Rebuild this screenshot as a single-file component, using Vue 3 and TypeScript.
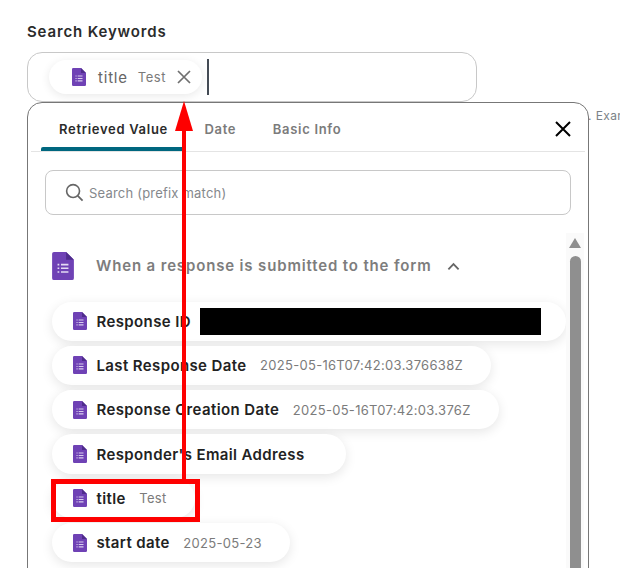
<script setup lang="ts">
interface Row { name: string; value?: string; redacted?: boolean }
const rows: Row[] = [
  { name: 'Response ID', redacted: true },
  { name: 'Last Response Date', value: '2025-05-16T07:42:03.376638Z' },
  { name: 'Response Creation Date', value: '2025-05-16T07:42:03.376Z' },
  { name: "Responder's Email Address", value: '' },
  { name: 'title', value: 'Test' },
  { name: 'start date', value: '2025-05-23' },
]
const tabs = ['Retrieved Value', 'Date', 'Basic Info']
</script>

<template>
  <div class="page">
    <div class="label">Search Keywords</div>
    <div class="field">
      <div class="chip">
        <svg class="ficon" viewBox="0 0 14 18"><path fill="#6f42b5" d="M1.2 0H9l5 5v11.800a1.200 1.200 0 0 1-1.200 1.200H1.200A1.200 1.200 0 0 1 0 16.800V1.200A1.200 1.200 0 0 1 1.200 0z"/><path fill="#4f2c8c" d="M9 0l5 5H9z"/><path fill="#d9cdee" d="M3.500 7.500h1.100v1.100H3.500zM5.700 7.500h4.800v1.100H5.700zM3.500 9.900h1.100V11H3.500zM5.700 9.900h4.800V11H5.700zM3.500 12.300h1.100v1.100H3.500zM5.700 12.300h4.800v1.100H5.700z"/></svg>
        <span class="chip-name">title</span>
        <span class="chip-value">Test</span>
        <svg class="chip-x" viewBox="0 0 14 14"><path d="M1 1l12 12M13 1L1 13" stroke="#6f6f6f" stroke-width="1.700" fill="none"/></svg>
      </div>
      <div class="caret"></div>
    </div>
    <div class="hint">. Example</div>
    <div class="popup">
      <div class="tabs">
        <div v-for="(t, i) in tabs" :key="t" class="tab" :class="{ active: i === 0 }">{{ t }}</div>
        <svg class="close" viewBox="0 0 18 18"><path d="M2 2l14 14M16 2L2 16" stroke="#000" stroke-width="2" fill="none"/></svg>
      </div>
      <div class="search">
        <svg class="search-icon" viewBox="0 0 20 20"><circle cx="8.500" cy="8.500" r="6.800" fill="none" stroke="#666" stroke-width="1.700"/><path d="M13.500 13.500l5 5" stroke="#666" stroke-width="1.900" fill="none"/></svg>
        <span class="placeholder">Search (prefix match)</span>
      </div>
      <div class="body">
        <div class="list">
          <div class="head">
            <svg class="head-icon" viewBox="0 0 14 18"><path fill="#6f42b5" d="M1.200 0H9l5 5v11.800a1.200 1.200 0 0 1-1.200 1.200H1.200A1.200 1.200 0 0 1 0 16.800V1.200A1.200 1.200 0 0 1 1.200 0z"/><path fill="#4f2c8c" d="M9 0l5 5H9z"/><path fill="#e4dbf3" d="M3.500 7.500h1.100v1.100H3.500zM5.700 7.500h4.800v1.100H5.700zM3.500 9.900h1.100V11H3.500zM5.700 9.900h4.800V11H5.700zM3.500 12.300h1.100v1.100H3.500zM5.700 12.300h4.800v1.100H5.700z"/></svg>
            <span class="head-text">When a response is submitted to the form</span>
            <svg class="chev" viewBox="0 0 14 9"><path d="M1.500 7.500L7 2l5.500 5.500" fill="none" stroke="#666" stroke-width="2"/></svg>
          </div>
          <div v-for="r in rows" :key="r.name" class="row" :class="{ wide: r.redacted }">
            <svg class="ficon" viewBox="0 0 14 18"><path fill="#6f42b5" d="M1.200 0H9l5 5v11.800a1.200 1.200 0 0 1-1.200 1.200H1.200A1.200 1.200 0 0 1 0 16.800V1.200A1.200 1.200 0 0 1 1.200 0z"/><path fill="#4f2c8c" d="M9 0l5 5H9z"/><path fill="#d9cdee" d="M3.500 7.500h1.100v1.100H3.500zM5.700 7.500h4.800v1.100H5.700zM3.500 9.900h1.100V11H3.500zM5.700 9.900h4.800V11H5.700zM3.500 12.300h1.100v1.100H3.500zM5.700 12.300h4.800v1.100H5.700z"/></svg>
            <span class="row-name">{{ r.name }}</span>
            <span v-if="r.value !== undefined" class="row-value">{{ r.value }}</span>
            <span v-if="r.redacted" class="redact"></span>
          </div>
        </div>
        <div class="scrollbar">
          <div class="scroll-up"></div>
          <div class="scroll-thumb"></div>
        </div>
      </div>
    </div>
    <div class="red-box"></div>
    <div class="arrow-line"></div>
    <div class="arrow-head"></div>
  </div>
</template>

<style scoped>
.page {
  position: relative;
  width: 620px;
  height: 568px;
  overflow: hidden;
  background: #fff;
  font-family: Inter, "Liberation Sans", sans-serif;
  padding: 22px 0 0 27px;
  box-sizing: border-box;
}
.label {
  font-size: 15px;
  line-height: 20px;
  font-weight: 600;
  letter-spacing: 0.85px;
  color: #2b2b2b;
  margin-bottom: 10px;
}
.field {
  width: 450px;
  height: 50px;
  box-sizing: border-box;
  border: 1px solid #c8c8c8;
  border-radius: 15px;
  display: flex;
  align-items: center;
  padding-left: 21px;
  gap: 5px;
}
.chip {
  width: 153px;
  height: 34px;
  box-sizing: border-box;
  border-radius: 17px;
  background: #fff;
  box-shadow: 0 2px 10px rgba(0, 0, 0, 0.09);
  display: flex;
  align-items: center;
  padding-left: 23px;
}
.ficon { width: 14px; height: 18px; flex: none; }
.chip-name { margin-left: 12px; font-size: 15px; color: #666; letter-spacing: 0.8px; }
.chip-value { margin-left: 10px; font-size: 13px; color: #7a7a7a; letter-spacing: 0.5px; }
.chip-x { width: 14px; height: 14px; margin-left: 11px; }
.caret { width: 2px; height: 36px; background: #444b55; }
.hint {
  position: absolute;
  left: 588px;
  top: 108px;
  font-size: 12px;
  line-height: 16px;
  letter-spacing: 0.4px;
  color: #7b8288;
  white-space: nowrap;
}
.popup {
  width: 562px;
  height: 500px;
  box-sizing: border-box;
  border: 1px solid #777;
  border-radius: 15px;
  background: #fff;
  padding: 0 3px;
}
.tabs {
  position: relative;
  height: 44px;
  padding-top: 4px;
  display: flex;
  align-items: center;
  border-bottom: 1px solid #e4e4e4;
  padding-left: 28px;
  gap: 36.500px;
}
.tab {
  position: relative;
  font-size: 13px;
  font-weight: 600;
  letter-spacing: 0.7px;
  color: #7b7b7b;
  white-space: nowrap;
}
.tab.active { color: #2b2b2b; }
.tab.active::after {
  content: "";
  position: absolute;
  left: -18px;
  right: -18px;
  top: 26px;
  height: 4px;
  border-radius: 2px 2px 0 0;
  background: #00677f;
}
.close {
  position: absolute;
  right: 13px;
  top: 17px;
  width: 18px;
  height: 18px;
}
.search {
  width: 526px;
  height: 45px;
  box-sizing: border-box;
  border: 1px solid #c8c8c8;
  border-radius: 8px;
  margin: 18px 0 0 14px;
  display: flex;
  align-items: center;
  padding-left: 19px;
  gap: 5px;
}
.search-icon { width: 19px; height: 19px; flex: none; }
.placeholder { font-size: 13px; color: #85888c; letter-spacing: 0.2px; }
.body { display: flex; margin-top: 18px; }
.list { flex: 1; padding-left: 21px; min-width: 0; }
.head {
  display: flex;
  align-items: center;
  height: 36px;
  margin-top: 15px;
  margin-bottom: 17.500px;
}
.head-icon { width: 22px; height: 28px; flex: none; }
.head-text {
  margin-left: 22px;
  padding-bottom: 2px;
  font-size: 15px;
  font-weight: 600;
  letter-spacing: 0.85px;
  color: #7d7d7d;
  white-space: nowrap;
}
.chev { width: 13px; height: 9px; margin-left: 15px; }
.row {
  width: fit-content;
  height: 39.300px;
  box-sizing: border-box;
  border-radius: 20px;
  background: #fff;
  box-shadow: 0 3px 12px rgba(0, 0, 0, 0.1);
  display: flex;
  align-items: center;
  padding: 0 28px 0 21px;
  margin-bottom: 5px;
}
.row.wide { width: 514px; padding-right: 0; }
.row-name {
  margin-left: 9.500px;
  font-size: 15px;
  font-weight: 600;
  letter-spacing: 0.38px;
  color: #222;
  white-space: nowrap;
}
.row-value {
  margin-left: 13.500px;
  font-size: 13px;
  color: #7b7b7b;
  letter-spacing: 0.3px;
  white-space: nowrap;
}
.redact {
  width: 341px;
  height: 27px;
  margin-left: 9.500px;
  background: #000;
  flex: none;
}
.scrollbar {
  width: 18px;
  flex: none;
  margin-right: 1px;
  padding-top: 5px;
  display: flex;
  flex-direction: column;
  align-items: center;
  background: #fafafa;
}
.scroll-up {
  width: 0;
  height: 0;
  border-left: 6.500px solid transparent;
  border-right: 6.500px solid transparent;
  border-bottom: 10px solid #8f8f8f;
}
.scroll-thumb {
  width: 11px;
  height: 400px;
  margin-top: 8px;
  border-radius: 6px;
  background: #8f8f8f;
}
.red-box {
  position: absolute;
  left: 51px;
  top: 479px;
  width: 149px;
  height: 43px;
  box-sizing: border-box;
  border: 5px solid #fe0000;
}
.arrow-line {
  position: absolute;
  left: 182px;
  top: 125px;
  width: 4px;
  height: 355px;
  background: #fe0000;
}
.arrow-head {
  position: absolute;
  left: 175px;
  top: 101px;
  width: 0;
  height: 0;
  border-left: 9.500px solid transparent;
  border-right: 9.500px solid transparent;
  border-bottom: 30px solid #fe0000;
}
</style>
